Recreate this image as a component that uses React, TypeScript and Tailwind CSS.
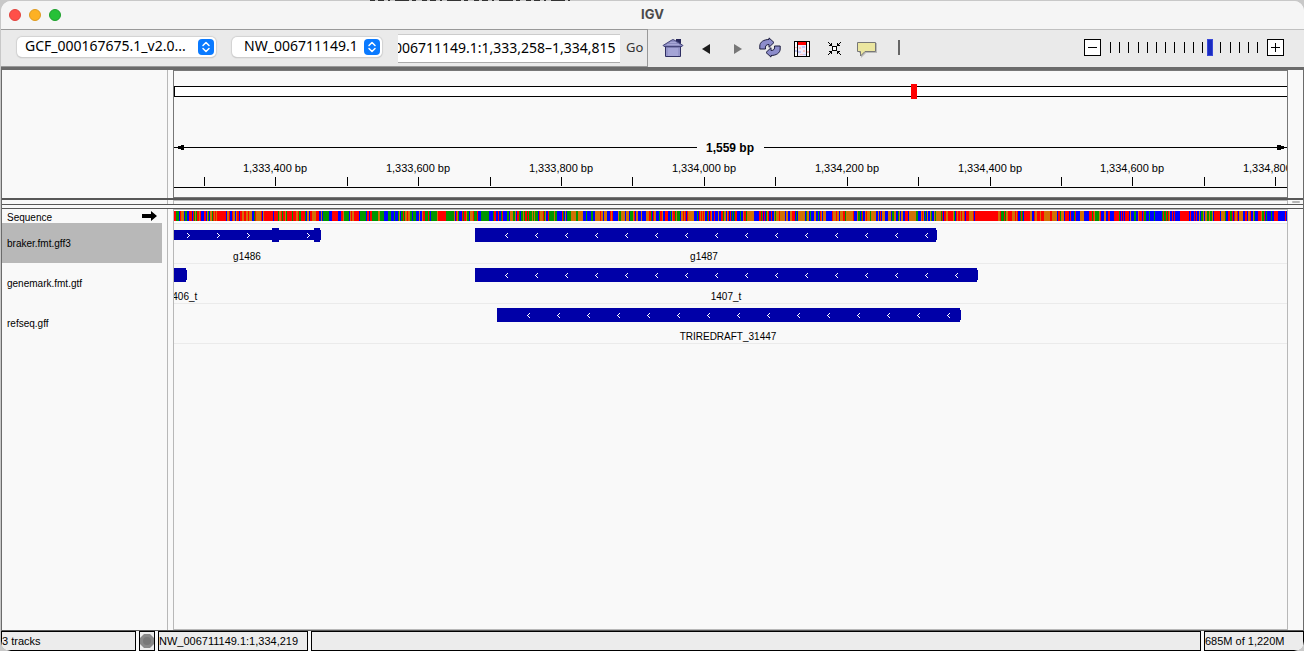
import { useEffect, useRef } from "react";

const NAVY = "#0000a8";
const TICKS = [30, 101, 173, 244, 316, 387, 458, 530, 601, 673, 744, 816, 887, 958, 1030, 1101];
const LABELS = ["1,333,400 bp", "1,333,600 bp", "1,333,800 bp", "1,334,000 bp", "1,334,200 bp", "1,334,400 bp", "1,334,600 bp", "1,334,800 bp"];

const BASES: Record<string, string> = { T: "#ff0000", A: "#009600", C: "#0000ff", G: "#d17105" };

// Base composition by stretch: [start, end, weighted letters]
const ZONES: [number, number, string][] = [
  [0, 40, "TTTAACGGC"],
  [40, 145, "TTTTTAGGC"],
  [145, 220, "TTAAACCG"],
  [220, 296, "CCTTAAG"],
  [296, 400, "CCAAGGT"],
  [400, 566, "CCGGTTA"],
  [566, 760, "GGGCCTA"],
  [760, 886, "GGTTTTAC"],
  [886, 1113, "CCTTAGC"],
];

const BLOCKS: [number, number, string][] = [
  [43, 8, "T"], [82, 5, "G"], [149, 6, "A"], [159, 4, "T"], [200, 4, "A"], [267, 5, "T"], [275, 4, "A"],
  [296, 3, "G"], [315, 4, "C"], [376, 4, "A"], [383, 5, "C"], [482, 3, "C"], [514, 6, "G"], [653, 5, "C"],
  [763, 4, "G"], [803, 14, "T"], [887, 3, "G"], [906, 4, "G"], [921, 4, "A"], [981, 4, "C"], [1006, 4, "T"],
];

function sequencePaths() {
  const paths: Record<string, string> = { T: "", A: "", C: "", G: "" };
  let seed = 1487;
  const next = () => {
    seed = (seed * 1103515245 + 12345) % 2147483648;
    return seed / 2147483648;
  };
  for (const [from, to, letters] of ZONES) {
    let x = from;
    while (x < to) {
      const letter = letters[Math.floor(next() * letters.length)];
      const width = next() < 0.75 ? 1 : next() < 0.8 ? 2 : 3;
      paths[letter] += `M${x} 1h${Math.min(width, to - x)}v10H${x}z`;
      x += width;
    }
  }
  return paths;
}
const SEQUENCE = sequencePaths();

function Chevrons({ from, count, y, right = false }: { from: number; count: number; y: number; right?: boolean }) {
  const d = Array.from({ length: count }, (_, i) => {
    const x = from + i * 30;
    return right
      ? `M${x - 1} ${y - 2}h1v1h1v1h1v1h-1v1h-1v1h-1v-1h1v-1h1v-1h-1v-1h-1z`
      : `M${x + 2} ${y - 2}h-1v1h-1v1h-1v1h1v1h1v1h1v-1h-1v-1h-1v-1h1v-1h1z`;
  }).join("");
  return <path d={d} fill="#fff" />;
}

function Feature({ x, end, y }: { x: number; end: number; y: number }) {
  return (
    <g fill={NAVY}>
      <rect x={x} y={y} width={end - x} height={14} />
      <rect x={end} y={y + 2} width={1} height={10} />
    </g>
  );
}

function Picker({ label, value, className }: { label: string; value: string; className: string }) {
  return (
    <div className={`relative h-5 shrink-0 ${className}`}>
      <select
        aria-label={label}
        className="block h-5 w-full appearance-none rounded-[5px] bg-white pb-0.5 font-['Noto_Sans',sans-serif] text-[14px] leading-[18px] text-black shadow-[0_0_1px_1px_#d2d2d2,0_1px_1px_#aaa] outline-none"
      >
        <option>{value}</option>
      </select>
      <svg className="pointer-events-none absolute top-0.5 right-0.5" width="16" height="16" viewBox="0 0 16 16" aria-hidden="true">
        <rect width="16" height="16" rx="4" fill="#0a7aff" />
        <path d="M5 6.500 8 3.500l3 3M5 9.500l3 3 3-3" fill="none" stroke="#fff" strokeWidth="1.5" strokeLinecap="round" strokeLinejoin="round" />
      </svg>
    </div>
  );
}

function HomeIcon() {
  return (
    <svg width="22" height="20" viewBox="0 0 22 20">
      <path d="M4 8h14v10H4z" fill="#a4a4d6" />
      <path d="M4 8h14v2H4z" fill="#7c7cb0" />
      <path d="M5 10v8M17 10v8" stroke="#8686be" />
      <path d="M3.500 8v10.500h15V8" fill="none" stroke="#2e2e62" />
      <path d="M14 1h5v5h-5z" fill="#28285a" />
      <path d="M1 7.500 9 2.500l2-1 2 1 8 5-1 1H2z" fill="#8c8cc0" stroke="#45457a" />
      <path d="M5 6.500h12M8 4.500h6" stroke="#a7a7d6" />
    </svg>
  );
}

function RefreshIcon() {
  return (
    <svg width="22" height="22" viewBox="0 0 22 22" strokeLinejoin="miter">
      <path d="M.8 12V9c0-4 4-6.500 9.200-6.500V.9l5 4.600-5 4.800V7.500C7 7.500 6 9 6.500 12z" fill="#8d8dcb" stroke="#1d1d3f" />
      <path d="M21.200 9v3c0 4-4 6.500-9.200 6.500v1.600l-5-4.600 5-4.800v2.800c3 0 4-1.500 3.500-4.500z" fill="#8d8dcb" stroke="#1d1d3f" />
    </svg>
  );
}

function RegionIcon() {
  return (
    <svg width="16" height="16" viewBox="0 0 16 16" shapeRendering="crispEdges">
      <path d="M0 0h16v16H0z" fill="#000" />
      <path d="M1 1h2v14H1zM13 1h2v14h-2zM4 1h8v14H4z" fill="#fff" />
      <path d="M4 4h8v11H4z" fill="#eeeafa" />
      <path d="M4 1h8v3H4z" fill="#f00" />
      <path d="M5 6h2v2H5zM9 9h2v2H9zM6 13h3v1H6zM1 6h2v1H1zM13 10h2v2h-2z" fill="#ffc0c0" />
      <path d="M8 5h3v2H8zM4 10h3v2H4zM9 13h3v1H9zM1 9h2v2H1z" fill="#c4c8f8" />
    </svg>
  );
}

function FitIcon() {
  return (
    <svg width="13" height="13" viewBox="0 0 13 13" shapeRendering="crispEdges">
      <path d="M4 4h5v5H4z" />
      <path d="M5 5h3v3H5z" fill="#fff" />
      <path d="M0 0h1v1h1v1h1v-1h1v3H1v-1h1V2H1V1H0zM13 0h-1v1h-1v1h-1V1H9v3h3V3h-1V2h1V1h1zM0 13h1v-1h1v-1h1v1h1V9H1v1h1v1H1v1H0zM13 13h-1v-1h-1v-1h-1v1H9V9h3v1h-1v1h1v1h1z" />
    </svg>
  );
}

function BubbleIcon() {
  return (
    <svg width="20" height="17" viewBox="0 0 20 17">
      <path d="M2 2h18v10H9l-5 5v-5H2z" fill="#999" opacity=".6" />
      <path d="M.5 1.500h18v9H8l-4.500 4.500v-4.500h-3z" fill="#ebe6a0" stroke="#777" />
    </svg>
  );
}

function Header() {
  return (
    <svg className="block h-[126px] w-full font-['Liberation_Sans',Arial,sans-serif]" shapeRendering="crispEdges">
      <rect x="0" y="15" width="100%" height="11" fill="#000" />
      <rect x="1" y="16" width="100%" height="9" fill="#fff" />
      <rect x="737" y="13" width="6" height="15" fill="#f00" />
      <rect x="0" y="76" width="523" height="1" />
      <path d="M3 76h1v-1h3v-1h3v5H7v-1H4v-1H3z" />
      <svg x="590" y="70" width="100%" height="14" overflow="visible">
        <rect x="0" y="6" width="100%" height="1" />
      </svg>
      <path d="M1103 74h4v1h3v3h-3v1h-4z" />
      <text x="556" y="81" textAnchor="middle" fontSize="12" fontWeight="700">1,559 bp</text>
      {TICKS.map((x) => (
        <rect key={x} x={x} y="106" width="1" height="9" />
      ))}
      {LABELS.map((label, i) => (
        <text key={label} x={TICKS[i * 2 + 1]} y="101" textAnchor="middle" fontSize="11">{label}</text>
      ))}
      <rect x="0" y="116" width="100%" height="1" />
    </svg>
  );
}

function Tracks() {
  return (
    <svg className="block h-[136px] w-full font-['Liberation_Sans',Arial,sans-serif] text-[10px]" shapeRendering="crispEdges">
      <rect width="100%" height="13" fill="#fff" />
      {Object.entries(SEQUENCE).map(([base, d]) => (
        <path key={base} d={d} fill={BASES[base]} />
      ))}
      {BLOCKS.map(([x, w, base]) => (
        <rect key={x} x={x} y="1" width={w} height="10" fill={BASES[base]} />
      ))}
      {[13, 53, 93, 133].map((y) => (
        <rect key={y} x="0" y={y} width="100%" height="1" fill="#ebebeb" />
      ))}
      <g fill={NAVY}>
        <rect x="0" y="20" width="147" height="10" />
        <rect x="98" y="18" width="7" height="14" />
        <rect x="140" y="18" width="6" height="14" />
      </g>
      <Chevrons from={14} count={3} y={25} right />
      <Chevrons from={134} count={1} y={25} right />
      <Feature x={301} end={762} y={18} />
      <Chevrons from={332} count={15} y={25} />
      <Feature x={0} end={12} y={58} />
      <Feature x={301} end={803} y={58} />
      <Chevrons from={332} count={16} y={65} />
      <Feature x={323} end={786} y={98} />
      <Chevrons from={354} count={15} y={105} />
      <g textAnchor="middle">
        <text x="73" y="50">g1486</text>
        <text x="530" y="50">g1487</text>
        <text x="8" y="90">1406_t</text>
        <text x="552" y="90">1407_t</text>
        <text x="554" y="130">TRIREDRAFT_31447</text>
      </g>
    </svg>
  );
}

const iconButton = "flex items-center justify-center";

export default function App() {
  const locus = useRef<HTMLInputElement>(null);
  useEffect(() => {
    if (locus.current) locus.current.scrollLeft = locus.current.scrollWidth;
  }, []);

  return (
    <div className="relative min-h-screen bg-[#c8c8c8] pt-px pl-px font-['Liberation_Sans',Arial,sans-serif] text-black">
      <svg className="absolute top-0 left-[370px]" width="200" height="1" aria-hidden="true">
        <path d="M0 .5h200" stroke="#333" strokeDasharray="5 3 6 4 2 5 14 3 4 6" />
      </svg>
      <div className="relative flex min-h-[calc(100vh-1px)] flex-col overflow-hidden rounded-[10px] bg-[#f9f9f9]">
        <header className="relative flex h-7 items-center bg-[#f5f5f5] pl-2">
          <div className="flex gap-2">
            <button aria-label="Close" className="size-3 rounded-full border border-[#e0443e] bg-[#ff5049]" />
            <button aria-label="Minimize" className="size-3 rounded-full border border-[#dd9a20] bg-[#fdb124]" />
            <button aria-label="Zoom window" className="size-3 rounded-full border border-[#1d9f2c] bg-[#27c138]" />
          </div>
          <h1 className="absolute inset-x-0 text-center font-['Inter',sans-serif] text-[13px] font-bold text-[#4a4a4a]">IGV</h1>
        </header>

        <div className="flex h-[38px] bg-[#eaeaea]">
          <div className="flex items-center border-t border-r border-b border-[#999] pr-1 pl-4">
            <Picker label="Genome" value="GCF_000167675.1_v2.0..." className="mb-0.5 w-[199px] [&>select]:pl-2" />
            <Picker label="Chromosome" value="NW_006711149.1" className="mb-0.5 ml-4 w-[150px] [&>select]:pl-3" />
            <input
              ref={locus}
              aria-label="Locus"
              defaultValue="NW_006711149.1:1,333,258–1,334,815"
              className="ml-4 h-[29px] w-[222px] border-t border-b border-t-[#ccc] border-b-[#aaa] bg-white pr-1 pb-0.5 font-['Noto_Sans',sans-serif] text-[14px] outline-none"
            />
            <button className="ml-1.5 font-['Noto_Sans',sans-serif] text-[13px] text-[#333]">Go</button>
          </div>
          <div className="flex grow items-center border-t border-[#c0c0c0] pb-0.5 pl-[14px]">
            <button aria-label="Home" className={iconButton}><HomeIcon /></button>
            <button aria-label="Back" className={`${iconButton} mt-0.5 ml-[17px]`}>
              <svg width="10" height="10" viewBox="0 0 10 10"><path d="M9 0v10L1 5z" fill="#1c1c1c" /></svg>
            </button>
            <button aria-label="Forward" className={`${iconButton} mt-0.5 ml-[22px]`}>
              <svg width="10" height="10" viewBox="0 0 10 10"><path d="M1 0v10l8-5z" fill="#777" /></svg>
            </button>
            <button aria-label="Refresh" className={`${iconButton} ml-4`}><RefreshIcon /></button>
            <button aria-label="Define region" className={`${iconButton} mt-0.5 ml-[13px]`}><RegionIcon /></button>
            <button aria-label="Fit to window" className={`${iconButton} mt-0.5 ml-[18px]`}><FitIcon /></button>
            <button aria-label="Popup text" className={`${iconButton} mt-1 ml-4`}><BubbleIcon /></button>
            <button aria-label="Ruler" className={`${iconButton} ml-5`}>
              <svg width="4" height="15" viewBox="0 0 4 15"><path d="M1 0h2v15H1z" fill="#666" /></svg>
            </button>
            <div className="mr-5 ml-auto flex items-center gap-1.5">
              <button aria-label="Zoom out" className="size-[17px] border border-black bg-white">
                <svg className="block" width="15" height="15" viewBox="0 0 15 15"><path d="M3 7.500h9" stroke="#000" /></svg>
              </button>
              <div className="relative h-[17px] w-[154px]">
                <svg className="block" width="154" height="17" shapeRendering="crispEdges">
                  {Array.from({ length: 17 }, (_, i) => (
                    <rect key={i} x={3 + Math.round(i * 9.2)} y="3" width="1" height="11" />
                  ))}
                </svg>
                <input
                  type="range"
                  aria-label="Zoom level"
                  min={0}
                  max={16}
                  step={0.1}
                  defaultValue={10.8}
                  className="absolute inset-0 h-[17px] w-full appearance-none bg-transparent [&::-webkit-slider-thumb]:h-[17px] [&::-webkit-slider-thumb]:w-[6px] [&::-webkit-slider-thumb]:appearance-none [&::-webkit-slider-thumb]:border [&::-webkit-slider-thumb]:border-[#3a48d8] [&::-webkit-slider-thumb]:bg-[#1a2cc0]"
                />
              </div>
              <button aria-label="Zoom in" className="size-[17px] border border-black bg-white">
                <svg className="block" width="15" height="15" viewBox="0 0 15 15"><path d="M3 7.500h9M7.500 3v9" stroke="#000" /></svg>
              </button>
            </div>
          </div>
        </div>

        <main className="flex grow flex-col border-x border-t-3 border-[#6b6b6b]">
          <section className="flex border-b-2 border-[#585858]">
            <div className="w-[166px] shrink-0 border-r border-[#b8b8b8]" />
            <div className="ml-[5px] min-w-0 grow border border-[#777]">
              <Header />
            </div>
            <div className="w-[15px] shrink-0" />
          </section>
          <div className="flex h-[5px] border-b border-[#585858]">
            <div className="w-[166px] border-r border-[#b8b8b8]" />
            <div className="ml-[5px] grow border-x border-t border-[#b8b8b8]" />
            <div className="flex w-[15px] items-center justify-center">
              <div className="h-0.5 w-2 rounded bg-[#b5b5b5]" />
            </div>
          </div>
          <section className="mt-[3px] flex grow border-y border-[#585858]">
            <ul className="w-[166px] shrink-0 border-r border-[#b8b8b8] text-[10px] leading-[14px]">
              <li className="flex h-[14px] items-center justify-between pt-1 pr-[10px] pl-[5px]">
                Sequence
                <svg className="mb-1" width="15" height="10" viewBox="0 0 15 10"><path d="M0 3h9V0l6 5-6 5V7H0z" /></svg>
              </li>
              <li className="mr-[5px] flex h-10 items-center bg-[#b8b8b8] pt-0.5 pl-[5px]">braker.fmt.gff3</li>
              <li className="flex h-10 items-center pt-0.5 pl-[5px]">genemark.fmt.gtf</li>
              <li className="flex h-10 items-center pt-0.5 pl-[5px]">refseq.gff</li>
            </ul>
            <div className="ml-[5px] min-w-0 grow border border-[#b8b8b8]">
              <Tracks />
            </div>
            <div className="w-[15px] shrink-0" />
          </section>
        </main>

        <footer className="flex h-5 gap-[3px] bg-[#f9f9f9] text-[11px] leading-[18px] *:border *:border-black *:bg-[#ececec]">
          <div className="w-[135px]">3 tracks</div>
          <div className="flex w-4 items-center justify-center">
            <svg width="14" height="14" viewBox="0 0 14 14">
              <path d="M4 0h6l4 4v6l-4 4H4l-4-4V4z" fill="#888" />
              <circle cx="7" cy="7" r="4" fill="#777" />
            </svg>
          </div>
          <div className="w-[150px]">NW_006711149.1:1,334,219</div>
          <div className="grow" />
          <div className="w-[100px]">685M of 1,220M</div>
        </footer>
      </div>
    </div>
  );
}
